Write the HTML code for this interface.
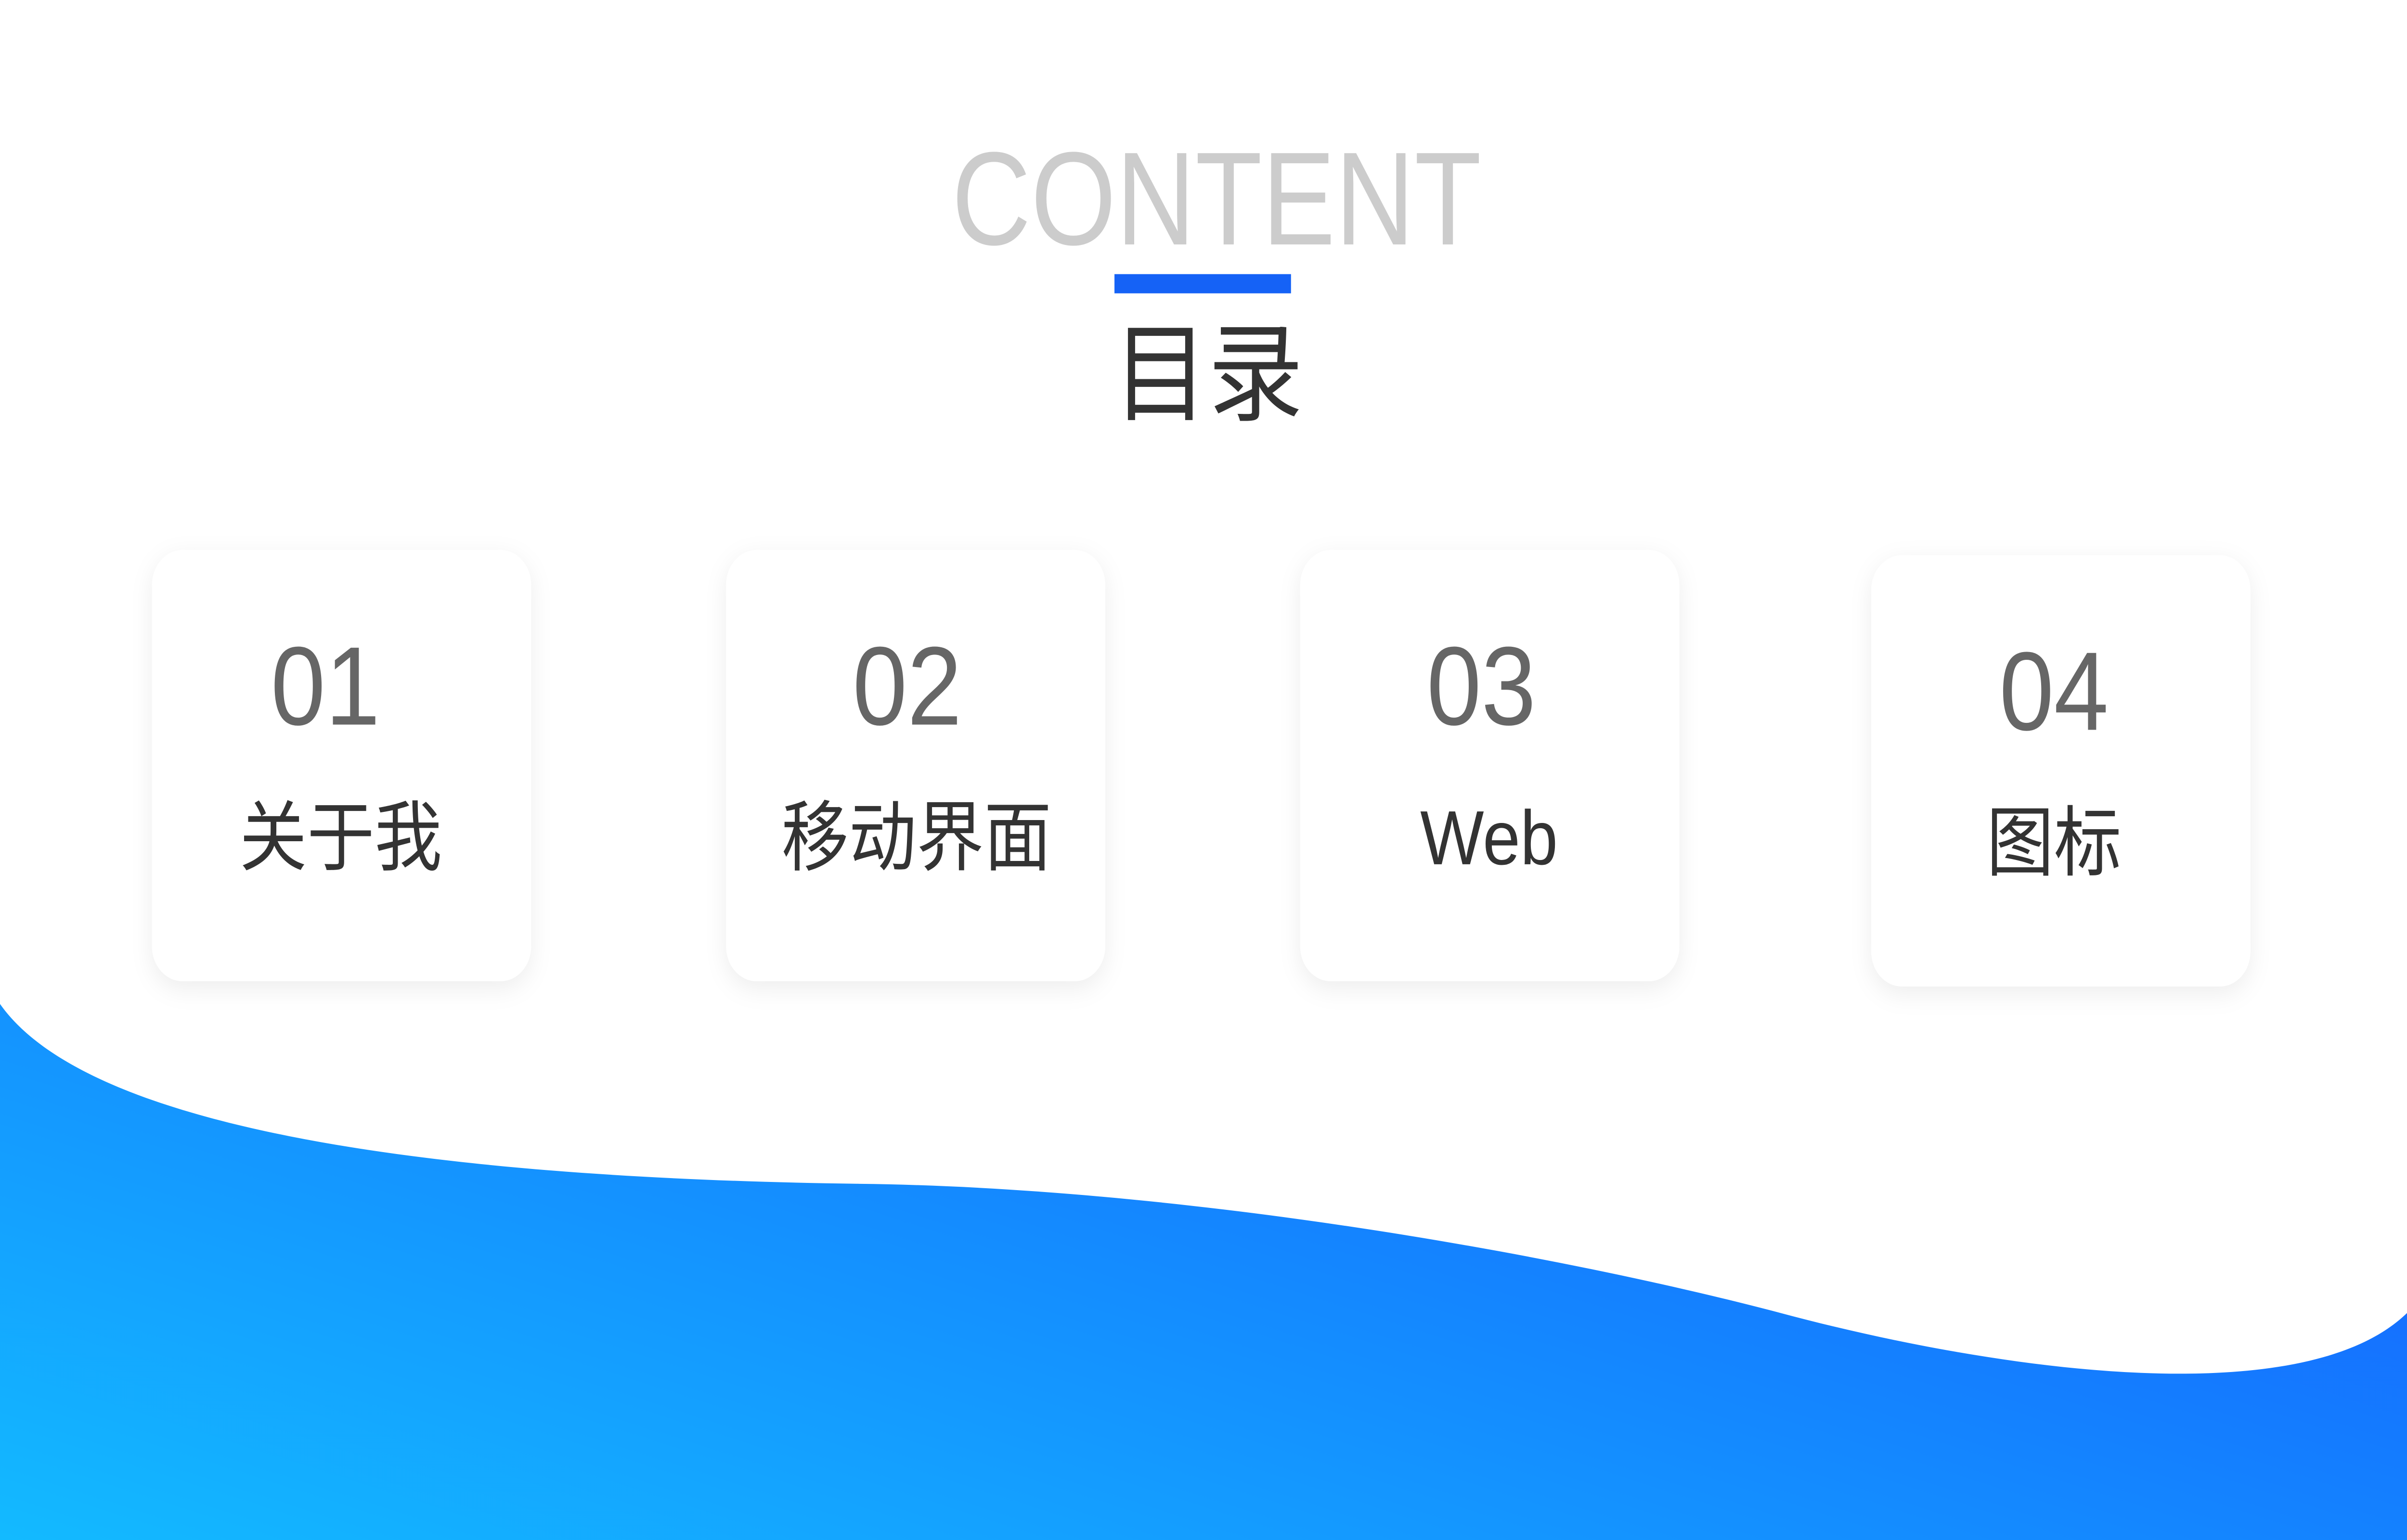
<!DOCTYPE html>
<html><head><meta charset="utf-8">
<style>
html,body{margin:0;padding:0;width:100%;height:100%;overflow:hidden;background:#fff;}
svg{display:block;width:100vw;height:100vh;}
text{font-family:"Liberation Sans","Noto Sans CJK SC",sans-serif;}
</style></head><body>
<svg viewBox="0 0 1568 882" preserveAspectRatio="none">
<defs>
<linearGradient id="g" x1="0" y1="1" x2="1" y2="0.3">
<stop offset="0" stop-color="#13baff"/><stop offset="1" stop-color="#1566ff"/></linearGradient>
<filter id="sh" x="-20%" y="-20%" width="140%" height="140%">
<feDropShadow dx="0" dy="4" stdDeviation="7" flood-color="#000" flood-opacity="0.07"/>
</filter>
</defs>
<path d="M0 575 C 60 650, 300 675, 560 678 C 760 680, 1000 715, 1160 752 C 1300 785, 1500 810, 1568 752 L1568 882 L0 882 Z" fill="url(#g)"/>
<text x="620" y="140" font-size="76" fill="#cccccc" textLength="345" lengthAdjust="spacingAndGlyphs">CONTENT</text>
<rect x="726" y="157" width="115" height="11" fill="#1562f6"/>
<text x="787" y="236" font-size="62" fill="#333" text-anchor="middle">目录</text>
<g filter="url(#sh)" fill="#fff">
<rect x="99" y="315" width="247" height="247" rx="20"/>
<rect x="473" y="315" width="247" height="247" rx="20"/>
<rect x="847" y="315" width="247" height="247" rx="20"/>
<rect x="1219" y="318" width="247" height="247" rx="20"/>
</g>
<g font-size="64" fill="#666" text-anchor="middle">
<text x="212" y="415">01</text>
<text x="591" y="415">02</text>
<text x="965" y="415">03</text>
<text x="1338" y="418">04</text>
</g>
<g font-size="44" fill="#333" text-anchor="middle">
<text x="222" y="495">关于我</text>
<text x="597" y="495">移动界面</text>
<text x="970" y="495">Web</text>
<text x="1338" y="498">图标</text>
</g>
</svg>
</body></html>
